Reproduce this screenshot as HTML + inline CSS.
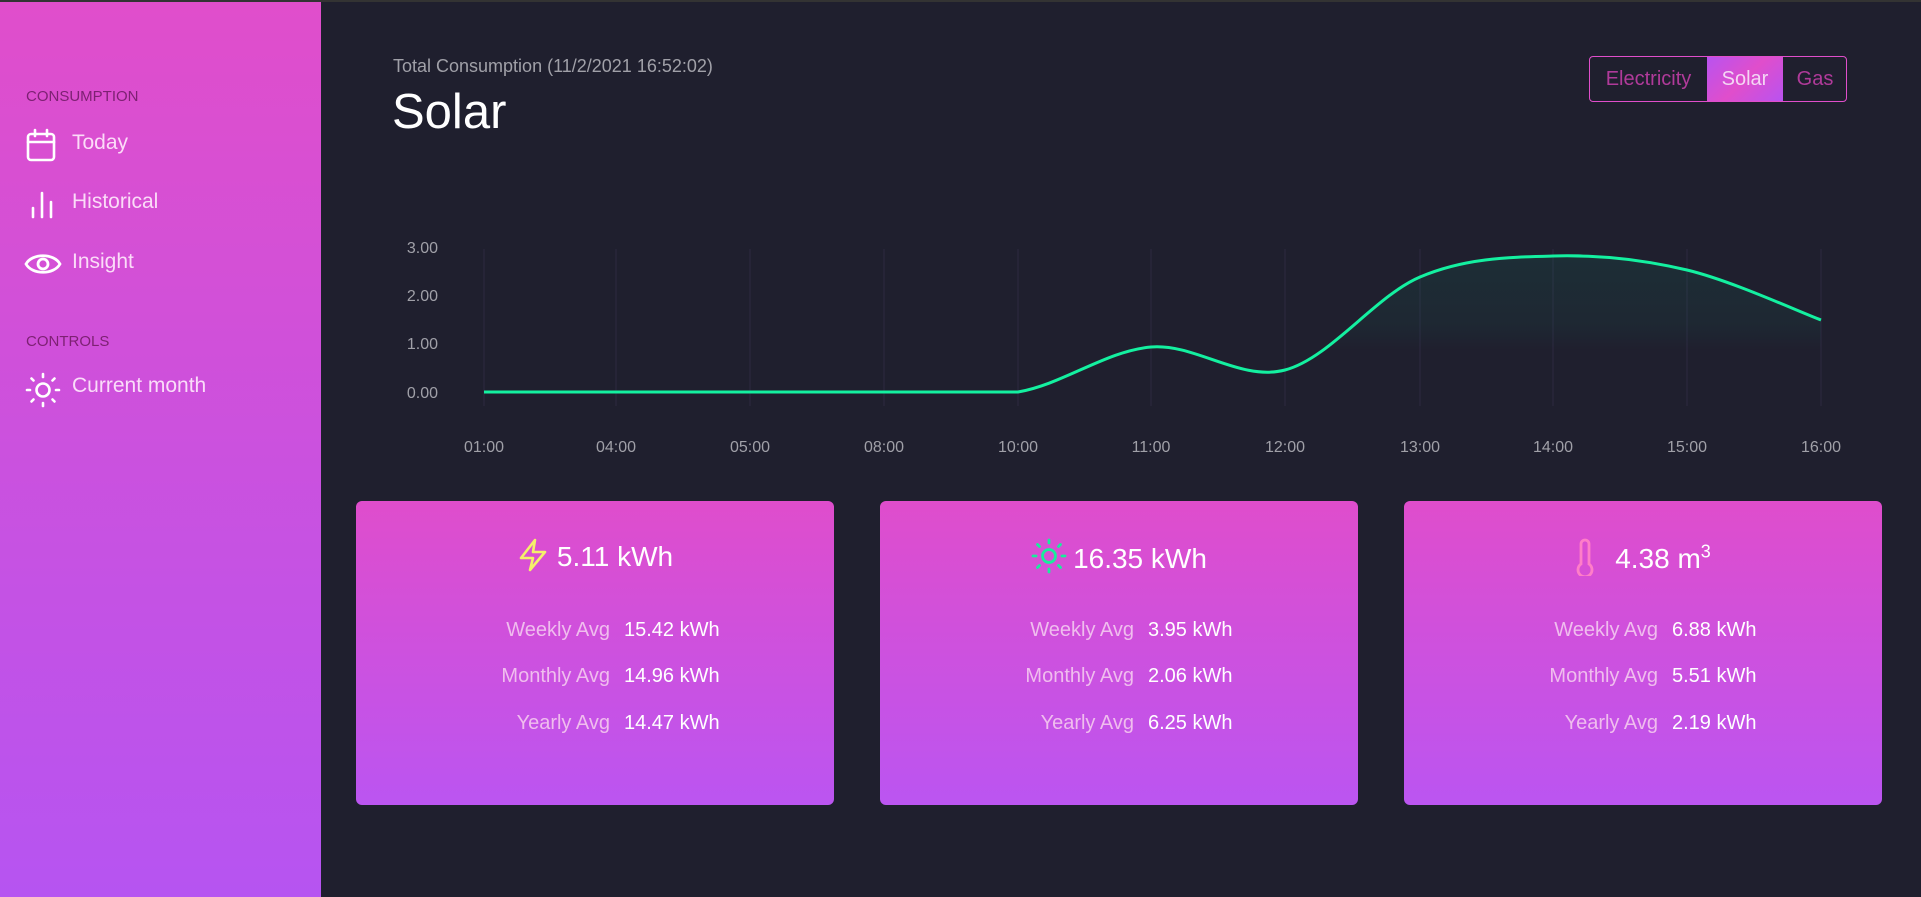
<!DOCTYPE html>
<html><head><meta charset="utf-8"><style>
*{margin:0;padding:0;box-sizing:border-box}
body{width:1921px;height:897px;background:#1f1f2e;font-family:"Liberation Sans",sans-serif;position:relative;overflow:hidden;color:#fff}
.side{position:absolute;left:0;top:2px;width:321px;height:895px;background:linear-gradient(#e04ecb,#b654f1)}
.sec{position:absolute;left:26px;font-size:15px;color:#7d2173;letter-spacing:0}
.item{position:absolute;left:72px;font-size:21px;color:rgba(255,235,252,0.9);font-weight:300}
.ic{position:absolute;left:25px}
.abs{position:absolute}
.card{position:absolute;top:501px;width:478px;height:304px;border-radius:6px;background:linear-gradient(#df4dcc,#bb55f1)}
.title{position:absolute;top:37px;left:0;width:100%;text-align:center;font-size:28px;color:#fff}
.row{position:absolute;left:0;width:100%;font-size:20px}
.row .l{position:absolute;right:224px;color:#f0bdee;white-space:nowrap}
.row .v{position:absolute;left:268px;color:#fff;white-space:nowrap}
.tog{position:absolute;left:1589px;top:56px;width:258px;height:46px;border:1px solid #e04ecb;border-radius:4px;overflow:hidden;font-size:20px}
.tog span{position:absolute;top:0;height:44px;line-height:44px;text-align:center}
</style></head><body>
<div class="abs" style="left:0;top:0;width:1921px;height:2px;background:#333"></div>
<div class="side">
<div class="sec" style="top:86px">CONSUMPTION</div>
<svg class="ic" style="top:126px" width="32" height="34" viewBox="0 0 32 34" fill="none" stroke="#fff" stroke-width="2.6" stroke-linecap="round"><rect x="3" y="6" width="26" height="26" rx="3"/><line x1="3" y1="14" x2="29" y2="14"/><line x1="10" y1="2" x2="10" y2="8"/><line x1="22" y1="2" x2="22" y2="8"/></svg>
<div class="item" style="top:129px">Today</div>
<svg class="ic" style="top:188px" width="32" height="30" viewBox="0 0 32 30" fill="none" stroke="#fff" stroke-width="2.6" stroke-linecap="round"><line x1="8" y1="18" x2="8" y2="27"/><line x1="17" y1="3" x2="17" y2="27"/><line x1="26" y1="12" x2="26" y2="27"/></svg>
<div class="item" style="top:188px">Historical</div>
<svg class="ic" style="top:247px;left:24px" width="38" height="30" viewBox="0 0 38 30" fill="none" stroke="#fff" stroke-width="2.8"><path d="M2 15C8 4 30 4 36 15C30 26 8 26 2 15Z"/><circle cx="19" cy="15" r="5"/></svg>
<div class="item" style="top:248px">Insight</div>
<div class="sec" style="top:331px">CONTROLS</div>
<svg class="ic" style="top:370px" width="36" height="36" viewBox="0 0 36 36" fill="none" stroke="#fff" stroke-width="2.6" stroke-linecap="round"><circle cx="18" cy="18" r="6.5"/><line x1="18" y1="2" x2="18" y2="5"/><line x1="18" y1="31" x2="18" y2="34"/><line x1="2" y1="18" x2="5" y2="18"/><line x1="31" y1="18" x2="34" y2="18"/><line x1="6.5" y1="6.5" x2="8.5" y2="8.5"/><line x1="27.5" y1="27.5" x2="29.5" y2="29.5"/><line x1="6.5" y1="29.5" x2="8.5" y2="27.5"/><line x1="27.5" y1="8.5" x2="29.5" y2="6.5"/></svg>
<div class="item" style="top:372px">Current month</div>
</div>

<div class="abs" style="left:393px;top:56px;font-size:18px;color:#a0a0a8">Total Consumption (11/2/2021 16:52:02)</div>
<div class="abs" style="left:392px;top:84px;font-size:49px;font-weight:300;color:#fff">Solar</div>

<div class="tog">
<span style="left:0;width:117px;color:#b03a9a">Electricity</span>
<span style="left:117px;width:76px;background:linear-gradient(135deg,#b853f0,#e04ecb 50%,#b853f0);color:#f4d6f4">Solar</span>
<span style="left:193px;width:64px;color:#b03a9a">Gas</span>
</div>

<svg class="abs" style="left:0;top:0" width="1921" height="897">
<defs><linearGradient id="f" x1="0" y1="0" x2="0" y2="1"><stop offset="0" stop-color="#00f5a0" stop-opacity="0.07"/><stop offset="0.5" stop-color="#00f5a0" stop-opacity="0.04"/><stop offset="0.7" stop-color="#00f5a0" stop-opacity="0"/></linearGradient></defs>
<g stroke="#2c2840" stroke-width="1">
<line x1="484" y1="249" x2="484" y2="406"/><line x1="616" y1="249" x2="616" y2="406"/><line x1="750" y1="249" x2="750" y2="406"/><line x1="884" y1="249" x2="884" y2="406"/><line x1="1018" y1="249" x2="1018" y2="406"/><line x1="1151" y1="249" x2="1151" y2="406"/><line x1="1285" y1="249" x2="1285" y2="406"/><line x1="1420" y1="249" x2="1420" y2="406"/><line x1="1553" y1="249" x2="1553" y2="406"/><line x1="1687" y1="249" x2="1687" y2="406"/><line x1="1821" y1="249" x2="1821" y2="406"/>
</g>
<path d="M484 392L1018 392C1062.5 384.5 1106.5 350.7 1151 347C1195.5 343.3 1240.2 381.7 1285 370C1329.8 358.3 1375.3 296 1420 277C1464.7 258 1508.5 257.2 1553 256C1597.5 254.8 1642.3 259.3 1687 270C1731.7 280.7 1798.7 311.7 1821 320L1821 392Z" fill="url(#f)"/>
<path d="M484 392L1018 392C1062.5 384.5 1106.5 350.7 1151 347C1195.5 343.3 1240.2 381.7 1285 370C1329.8 358.3 1375.3 296 1420 277C1464.7 258 1508.5 257.2 1553 256C1597.5 254.8 1642.3 259.3 1687 270C1731.7 280.7 1798.7 311.7 1821 320" fill="none" stroke="#14f0a0" stroke-width="3"/>
<g fill="#a0a0a8" font-family="Liberation Sans" font-size="16" text-anchor="end">
<text x="438" y="253">3.00</text><text x="438" y="301">2.00</text><text x="438" y="349">1.00</text><text x="438" y="398">0.00</text>
</g>
<g fill="#a0a0a8" font-family="Liberation Sans" font-size="16" text-anchor="middle">
<text x="484" y="452">01:00</text><text x="616" y="452">04:00</text><text x="750" y="452">05:00</text><text x="884" y="452">08:00</text><text x="1018" y="452">10:00</text><text x="1151" y="452">11:00</text><text x="1285" y="452">12:00</text><text x="1420" y="452">13:00</text><text x="1553" y="452">14:00</text><text x="1687" y="452">15:00</text><text x="1821" y="452">16:00</text>
</g>
</svg>

<div class="card" style="left:356px">
<div class="title"><svg style="vertical-align:-6px;margin-right:8px" width="32" height="34" viewBox="0 0 32 34" fill="none" stroke="#f4f06a" stroke-width="2.6" stroke-linejoin="round"><path d="M18 2L4 20H16L13 32L28 14H16Z"/></svg>5.11 kWh</div>
<div class="row" style="top:118px"><span class="l">Weekly Avg</span><span class="v">15.42 kWh</span></div>
<div class="row" style="top:164px"><span class="l">Monthly Avg</span><span class="v">14.96 kWh</span></div>
<div class="row" style="top:211px"><span class="l">Yearly Avg</span><span class="v">14.47 kWh</span></div>
</div>
<div class="card" style="left:880px">
<div class="title"><svg style="vertical-align:-6px;margin-right:6px" width="36" height="36" viewBox="0 0 36 36" fill="none" stroke="#18ec9c" stroke-width="2.8" stroke-linecap="round"><circle cx="18" cy="18" r="6.5"/><line x1="18" y1="2" x2="18" y2="5"/><line x1="18" y1="31" x2="18" y2="34"/><line x1="2" y1="18" x2="5" y2="18"/><line x1="31" y1="18" x2="34" y2="18"/><line x1="6.5" y1="6.5" x2="8.5" y2="8.5"/><line x1="27.5" y1="27.5" x2="29.5" y2="29.5"/><line x1="6.5" y1="29.5" x2="8.5" y2="27.5"/><line x1="27.5" y1="8.5" x2="29.5" y2="6.5"/></svg>16.35 kWh</div>
<div class="row" style="top:118px"><span class="l">Weekly Avg</span><span class="v">3.95 kWh</span></div>
<div class="row" style="top:164px"><span class="l">Monthly Avg</span><span class="v">2.06 kWh</span></div>
<div class="row" style="top:211px"><span class="l">Yearly Avg</span><span class="v">6.25 kWh</span></div>
</div>
<div class="card" style="left:1404px">
<div class="title"><svg style="vertical-align:-8px;margin-right:20px" width="20" height="38" viewBox="0 0 20 38" fill="none" stroke="#ff7ec8" stroke-width="2.8"><path d="M6 26V6A4 4 0 0 1 14 6V26A7 7 0 1 1 6 26Z"/></svg>4.38 m<sup style="font-size:18px">3</sup></div>
<div class="row" style="top:118px"><span class="l">Weekly Avg</span><span class="v">6.88 kWh</span></div>
<div class="row" style="top:164px"><span class="l">Monthly Avg</span><span class="v">5.51 kWh</span></div>
<div class="row" style="top:211px"><span class="l">Yearly Avg</span><span class="v">2.19 kWh</span></div>
</div>
</body></html>
